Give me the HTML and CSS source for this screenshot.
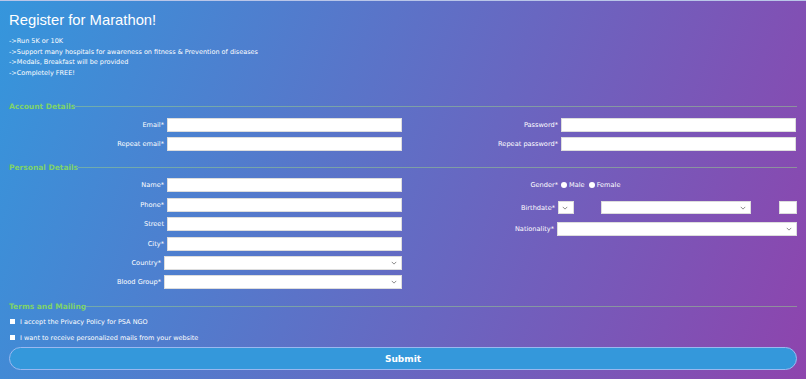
FILE: index.html
```html
<!DOCTYPE html>
<html>
<head>
<meta charset="utf-8">
<link rel="stylesheet" href="styles.css">
</head>
<body>
<div class="page">
  <h1 class="title">Register for Marathon!</h1>
  <ul class="bullets">
    <li>-&gt;Run 5K or 10K</li>
    <li>-&gt;Support many hospitals for awareness on fitness &amp; Prevention of diseases</li>
    <li>-&gt;Medals, Breakfast will be provided</li>
    <li>-&gt;Completely FREE!</li>
  </ul>

  <div class="legend first">Account Details</div>
  <div class="cols account">
    <div class="col">
      <div class="row"><label>Email*</label><span class="input"></span></div>
      <div class="row"><label>Repeat email*</label><span class="input"></span></div>
    </div>
    <div class="col">
      <div class="row"><label>Password*</label><span class="input"></span></div>
      <div class="row"><label>Repeat password*</label><span class="input"></span></div>
    </div>
  </div>

  <div class="legend">Personal Details</div>
  <div class="cols personal">
    <div class="col">
      <div class="row"><label>Name*</label><span class="input"></span></div>
      <div class="row"><label>Phone*</label><span class="input"></span></div>
      <div class="row"><label>Street</label><span class="input"></span></div>
      <div class="row"><label>City*</label><span class="input"></span></div>
      <div class="row sel"><label>Country*</label><span class="input select"><svg class="chev" viewBox="0 0 8 5"><path d="M1 1l3 3 3-3"/></svg></span></div>
      <div class="row sel"><label>Blood Group*</label><span class="input select"><svg class="chev" viewBox="0 0 8 5"><path d="M1 1l3 3 3-3"/></svg></span></div>
    </div>
    <div class="col right">
      <div class="row gender"><label>Gender*</label><span class="radio"></span><span class="opt">Male</span><span class="radio"></span><span class="opt">Female</span></div>
      <div class="row birth"><label>Birthdate*</label>
        <span class="input select day"><svg class="chev" viewBox="0 0 8 5"><path d="M1 1l3 3 3-3"/></svg></span>
        <span class="input select month"><svg class="chev" viewBox="0 0 8 5"><path d="M1 1l3 3 3-3"/></svg></span>
        <span class="input year"></span>
      </div>
      <div class="row sel nat"><label>Nationality*</label><span class="input select"><svg class="chev" viewBox="0 0 8 5"><path d="M1 1l3 3 3-3"/></svg></span></div>
    </div>
  </div>

  <div class="legend">Terms and Mailing</div>
  <div class="checks">
    <div class="check"><span class="box"></span>I accept the Privacy Policy for PSA NGO</div>
    <div class="check"><span class="box"></span>I want to receive personalized mails from your website</div>
  </div>
  <button class="submit">Submit</button>
</div>
</body>
</html>
```
FILE: styles.css
```css
html, body {
  margin: 0;
  padding: 0;
  height: 100%;
}
body {
  background: linear-gradient(110deg, #3596dc 0%, #8e44ad 100%);
  border-top: 1px solid #b9c6e8;
  box-sizing: border-box;
  font-family: "DejaVu Sans", sans-serif;
  color: #fff;
  overflow: hidden;
}
.page {
  padding: 0 9px;
}
.title {
  margin: 0;
  padding-top: 9px;
  font-family: "Liberation Sans", Arial, sans-serif;
  font-size: 14.8px;
  font-weight: normal;
  line-height: 20px;
}
.bullets {
  list-style: none;
  margin: 6px 0 0;
  padding: 0;
  font-size: 6.5px;
  line-height: 10.5px;
}
.legend {
  display: flex;
  align-items: center;
  color: #7fd36a;
  font-size: 7.5px;
  font-weight: bold;
  height: 10px;
}
.legend::after {
  content: "";
  flex: 1;
  height: 1px;
  background: rgba(150, 200, 140, 0.55);
}
.legend.first { margin-top: 23px; }
.account { margin-top: 7px; margin-bottom: 11px; }
.personal { margin-top: 6px; margin-bottom: 12px; }
.cols {
  display: grid;
  grid-template-columns: 394px 394px;
}
.col {
  display: flex;
  flex-direction: column;
  gap: 5.4px;
}
.row {
  display: flex;
  align-items: center;
  height: 14px;
}
.row label {
  width: 155px;
  text-align: right;
  font-size: 6.6px;
  padding-right: 3px;
  flex: none;
}
.input {
  display: block;
  width: 235px;
  height: 14px;
  background: #fff;
  border: 1px solid #ddd;
  box-sizing: border-box;
  position: relative;
  flex: none;
}
.sel label { width: 152px; }
.sel .input { width: 238px; }
.nat label { width: 151px; }
.nat .input { width: 240px; }
.chev {
  position: absolute;
  right: 4px;
  top: 4px;
  width: 6px;
  height: 4px;
  fill: none;
  stroke: #666;
  stroke-width: 1;
}
.right { gap: 0; }
.gender { margin-bottom: 9px; }
.gender .radio {
  width: 6px;
  height: 6px;
  border-radius: 50%;
  background: #fff;
  margin-right: 2px;
}
.gender .opt { font-size: 6.6px; margin-right: 4px; }
.birth { margin-bottom: 8px; height: 13px; }
.birth label { width: 152px; }
.birth .input { height: 13px; }
.birth .day { width: 16px; }
.birth .day .chev { right: 5px; }
.birth .month { width: 150px; margin-left: 27px; }
.birth .year { width: 18px; margin-left: 28px; }
.checks {
  margin-top: 6px;
  display: flex;
  flex-direction: column;
  gap: 7px;
  font-size: 6.5px;
}
.check {
  display: flex;
  align-items: center;
  height: 9px;
  padding-left: 1px;
}
.box {
  width: 5px;
  height: 5px;
  background: #fff;
  margin-right: 5px;
}
.submit {
  display: block;
  margin-top: 5px;
  width: 788px;
  height: 23px;
  border-radius: 12px;
  border: 1px solid #9ab8f0;
  background: #3498db;
  color: #fff;
  font-family: "DejaVu Sans", sans-serif;
  font-weight: bold;
  font-size: 9px;
}
```
